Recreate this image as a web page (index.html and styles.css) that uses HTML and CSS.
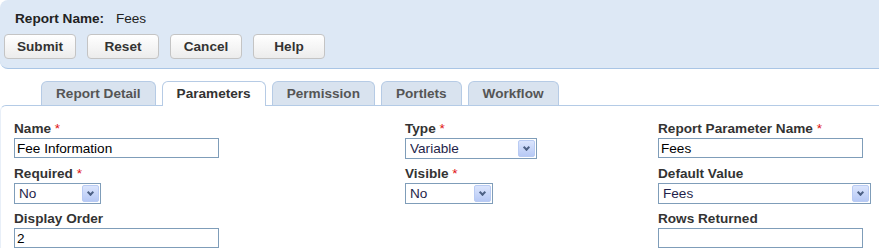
FILE: index.html
```html
<!DOCTYPE html>
<html lang="en">
<head>
    <meta charset="UTF-8">
    <title>Report Parameters</title>
    <link rel="stylesheet" href="styles.css">
</head>
<body>
    <div class="header">
        <div class="report-name"><b>Report Name:</b> Fees</div>
        <div class="actions">
            <button type="button">Submit</button>
            <button type="button">Reset</button>
            <button type="button">Cancel</button>
            <button type="button">Help</button>
        </div>
    </div>

    <div class="tabs">
        <div class="tab">Report Detail</div>
        <div class="tab active">Parameters</div>
        <div class="tab">Permission</div>
        <div class="tab">Portlets</div>
        <div class="tab">Workflow</div>
    </div>

    <div class="content">
        <form class="param-form">
            <div class="field">
                <label for="name">Name <span class="req">*</span></label>
                <input type="text" id="name" class="w205" value="Fee Information">
            </div>
            <div class="field">
                <label for="type">Type <span class="req">*</span></label>
                <div class="select w132">
                    <select id="type"><option>Variable</option></select>
                </div>
            </div>
            <div class="field">
                <label for="param_name">Report Parameter Name <span class="req">*</span></label>
                <input type="text" id="param_name" class="w205" value="Fees">
            </div>

            <div class="field">
                <label for="required">Required <span class="req">*</span></label>
                <div class="select w87">
                    <select id="required"><option>No</option></select>
                </div>
            </div>
            <div class="field">
                <label for="visible">Visible <span class="req">*</span></label>
                <div class="select w88">
                    <select id="visible"><option>No</option></select>
                </div>
            </div>
            <div class="field">
                <label for="default_value">Default Value</label>
                <div class="select w213">
                    <select id="default_value"><option>Fees</option></select>
                </div>
            </div>

            <div class="field">
                <label for="display_order">Display Order</label>
                <input type="text" id="display_order" class="w205" value="2">
            </div>
            <div class="field"></div>
            <div class="field">
                <label for="rows_returned">Rows Returned</label>
                <input type="text" id="rows_returned" class="w205" value="">
            </div>
        </form>
    </div>
</body>
</html>
```

FILE: styles.css
```css
body {
    margin: 0;
    font-family: Arial, "Liberation Sans", sans-serif;
    font-size: 13.6px;
    color: #333;
    background: #fff;
}

/* Header panel */
.header {
    background-color: #dde8f5;
    border-bottom: 1px solid #a9c5e5;
    border-radius: 8px 0 0 8px;
    padding: 11px 0 9px 4px;
}
.report-name {
    line-height: 16px;
    margin-left: 11px;
    color: #222;
}
.report-name b {
    margin-right: 8px;
}
.actions {
    display: flex;
    gap: 11px;
    margin-top: 7px;
}
.actions button {
    width: 72px;
    height: 25px;
    padding: 0;
    border: 1px solid #c4c4c4;
    border-radius: 4px;
    background: linear-gradient(to bottom, #ffffff, #ececec);
    font-family: Arial, "Liberation Sans", sans-serif;
    font-size: 13.6px;
    font-weight: bold;
    color: #333;
    cursor: pointer;
}
.actions button:hover {
    background: linear-gradient(to bottom, #ffffff, #dde8f5);
}

/* Tabs */
.tabs {
    display: flex;
    gap: 6px;
    margin-top: 12px;
    padding-left: 41px;
}
.tab {
    height: 24px;
    box-sizing: border-box;
    padding: 4px 14px 0 14px;
    line-height: 16px;
    background-color: #d9e3ef;
    border: 1px solid #b6cbe5;
    border-bottom: none;
    border-radius: 6px 6px 0 0;
    font-weight: bold;
    color: #555;
    cursor: pointer;
}
.tab.active {
    background-color: #fff;
    color: #333;
    position: relative;
    margin-bottom: -1px;
    height: 25px;
}

/* Content */
.content {
    border-top: 1px solid #b4cbe6;
    border-left: 1px solid #e8eff8;
    border-top-left-radius: 6px;
}
.param-form {
    display: grid;
    grid-template-columns: 391px 253px 1fr;
    row-gap: 7px;
    padding: 15px 0 0 13px;
}
.field label {
    display: block;
    line-height: 16px;
    margin-bottom: 1px;
    font-weight: bold;
    color: #333;
}
.req {
    color: #e01010;
    font-weight: normal;
}
.field input {
    display: block;
    box-sizing: border-box;
    height: 20px;
    margin: 0;
    padding: 0 2px;
    border: 1px solid #7f9db9;
    font-family: Arial, "Liberation Sans", sans-serif;
    font-size: 13.6px;
    color: #000;
    background: #fff;
}

/* Select with the old style arrow button */
.select {
    position: relative;
    box-sizing: border-box;
    height: 21px;
    border: 1px solid #7f9db9;
    background: #fff;
}
.select select {
    appearance: none;
    -webkit-appearance: none;
    width: 100%;
    height: 19px;
    margin: 0;
    padding: 0 0 0 4px;
    border: none;
    outline: none;
    background: transparent;
    font-family: Arial, "Liberation Sans", sans-serif;
    font-size: 13.6px;
    color: #1f1f4a;
}
.select::after {
    content: "";
    position: absolute;
    top: 1px;
    right: 1px;
    width: 15px;
    height: 15px;
    border: 1px solid #b9cbf3;
    border-radius: 2px;
    background: linear-gradient(to bottom, #dbe5fd, #b7c9f5);
    pointer-events: none;
}
.select::before {
    content: "";
    position: absolute;
    top: 6px;
    right: 7px;
    width: 3px;
    height: 3px;
    border-right: 2px solid #4d6185;
    border-bottom: 2px solid #4d6185;
    transform: rotate(45deg);
    z-index: 1;
    pointer-events: none;
}

.w205 { width: 205px; }
.w213 { width: 213px; }
.w132 { width: 132px; }
.w87 { width: 87px; }
.w88 { width: 88px; }
```
